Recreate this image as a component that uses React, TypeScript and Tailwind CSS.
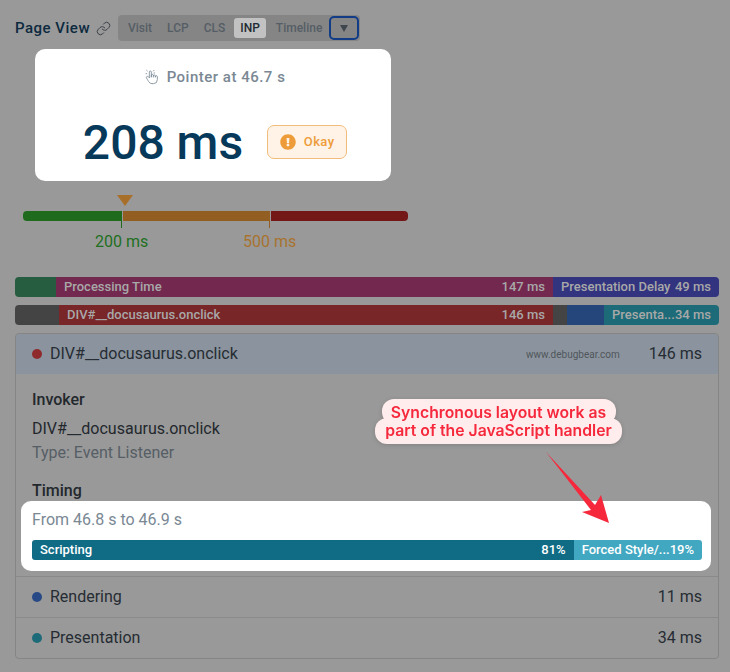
import { Link as LinkIcon } from 'lucide-react'
import { FaExclamationCircle } from 'react-icons/fa'
import { TbHandClick } from 'react-icons/tb'

function Tab({ label, active }: { label: string; active?: boolean }) {
  return (
    <div
      className={
        active
          ? 'flex h-5 items-center rounded-[3px] bg-[#c2c2c2] px-[6px] text-[#222b33]'
          : 'flex h-5 items-center px-[6px] text-[#555e66]'
      }
    >
      {label}
    </div>
  )
}

function Segment({ className, label, value }: { className: string; label?: string; value?: string }) {
  if (!label) return <div className={`h-5 shrink-0 ${className}`} />
  return (
    <div className={`flex h-5 shrink-0 items-center justify-between whitespace-nowrap px-2 text-[13px] font-medium text-[#a8a8a8] ${className}`}>
      <span>{label}</span>
      <span>{value}</span>
    </div>
  )
}

function TimingRow({ color, label, value }: { color: string; label: string; value: string }) {
  return (
    <div className="flex h-[41px] items-center justify-between border-t border-[#8a8a8a] px-4 text-base text-[#262c33]">
      <div className="flex items-center gap-2">
        <span className={`h-[10px] w-[10px] rounded-full ${color}`} />
        <span>{label}</span>
      </div>
      <span>{value}</span>
    </div>
  )
}

export default function App() {
  return (
    <div className="relative h-[672px] w-[730px] overflow-hidden bg-[#999999] pl-[15px] pr-[11px] pt-[15px] font-['Roboto',sans-serif]">
      <div className="flex h-[26px] items-center">
        <span className="text-[15px] font-medium tracking-[0.5px] text-[#0d2a3f]">Page View</span>
        <LinkIcon size={15} strokeWidth={1.5} className="ml-[6px] text-[#333a40]" />
        <div className="ml-[7px] flex h-[26px] w-[242px] items-center rounded-[4px] bg-[#858585] pl-[4px] text-xs font-medium">
          <Tab label="Visit" />
          <div className="w-[3px]" />
          <Tab label="LCP" />
          <div className="w-[3px]" />
          <Tab label="CLS" />
          <div className="w-[3px]" />
          <Tab label="INP" active />
          <div className="w-[4px]" />
          <Tab label="Timeline" />
          <div className="ml-[1px] flex h-6 w-[30px] items-center justify-center rounded-[5px] border-2 border-[#123c86]">
            <div className="h-0 w-0 border-x-[4px] border-t-[7px] border-x-transparent border-t-[#3f464d]" />
          </div>
        </div>
      </div>

      <div className="ml-5 mt-2 flex h-[132px] w-[356px] flex-col items-center rounded-[10px] bg-white pt-[17px]">
        <div className="flex items-center gap-[7px] pl-[3px] text-[15px] font-medium tracking-[0.5px] text-[#7a8894]">
          <TbHandClick size={16} strokeWidth={1.25} />
          <span>Pointer at 46.7 s</span>
        </div>
        <div className="mt-[24px] flex items-center pl-1">
          <span className="text-[48px] font-medium leading-[60px] text-[#07395a]">208 ms</span>
          <div className="mb-[2px] ml-[24px] flex h-[34px] w-[80px] items-center justify-center gap-2 rounded-[7px] border border-[#f2bd7c] bg-[#fef3e6] text-[13px] font-medium tracking-[0.4px] text-[#ee9c3a]">
            <FaExclamationCircle size={16} />
            <span>Okay</span>
          </div>
        </div>
      </div>

      <div className="ml-[102px] mt-[14px] h-0 w-0 border-x-[8px] border-t-[11px] border-x-transparent border-t-[#a86f2a]" />
      <div className="ml-2 mt-[5px] flex h-[10px] w-[385px] gap-px overflow-hidden rounded-[4px]">
        <div className="w-[99px] bg-[#1f6b1e]" />
        <div className="w-[147px] bg-[#935e22]" />
        <div className="flex-1 bg-[#741717]" />
      </div>
      <div className="relative ml-2 h-[46px] w-[385px] text-base">
        <div className="absolute left-[98px] top-0 h-[7px] w-px bg-[#1f6b1e]" />
        <div className="absolute left-[246px] top-0 h-[7px] w-px bg-[#935e22]" />
        <span className="absolute left-[72px] top-[9px] text-[#21701f]">200 ms</span>
        <span className="absolute left-[220px] top-[9px] text-[#a8732e]">500 ms</span>
      </div>

      <div className="mt-[10px] flex h-5 overflow-hidden rounded-[4px]">
        <Segment className="w-[41px] bg-[#265c3f]" />
        <Segment className="w-[497px] bg-[#72284f]" label="Processing Time" value="147 ms" />
        <Segment className="flex-1 bg-[#33347f]" label="Presentation Delay" value="49 ms" />
      </div>
      <div className="mt-2 flex h-5 overflow-hidden rounded-[4px]">
        <Segment className="w-[44px] bg-[#444444]" />
        <Segment className="w-[494px] bg-[#782628]" label="DIV#__docusaurus.onclick" value="146 ms" />
        <Segment className="w-[14px] bg-[#444444]" />
        <Segment className="w-[37px] bg-[#25467b]" />
        <Segment className="flex-1 bg-[#1d6b78]" label="Presenta..." value="34 ms" />
      </div>

      <div className="mt-2 h-[326px] rounded-[4px] border border-[#858585]">
        <div className="flex h-[40px] items-center rounded-t-[4px] bg-[#8b949e] px-4 text-base text-[#262c33]">
          <span className="h-[10px] w-[10px] rounded-full bg-[#8f2a2c]" />
          <span className="ml-2">DIV#__docusaurus.onclick</span>
          <span className="ml-auto text-[10px] text-[#50565c]">www.debugbear.com</span>
          <span className="ml-[29px]">146 ms</span>
        </div>
        <div className="px-4 pt-[17px] text-base text-[#23282d]">
          <div className="font-medium leading-[18px]">Invoker</div>
          <div className="mt-[11px] leading-[18px]">DIV#__docusaurus.onclick</div>
          <div className="mt-[6px] leading-[18px] text-[#565e66]">Type: Event Listener</div>
          <div className="mt-5 font-medium leading-[18px]">Timing</div>
        </div>
        <div className="ml-[5px] mr-[7px] mt-[1px] flex h-[70px] flex-col rounded-[10px] bg-white pl-[11px] pr-[9px] pt-[9px]">
          <div className="text-base leading-[20px] text-[#7a8894]">From 46.8 s to 46.9 s</div>
          <div className="mt-[10px] flex h-5 overflow-hidden rounded-[3px] text-[13px] font-medium text-white">
            <div className="flex w-[542px] items-center justify-between bg-[#106c85] px-2">
              <span>Scripting</span>
              <span>81%</span>
            </div>
            <div className="flex flex-1 items-center justify-between whitespace-nowrap bg-[#42a7c1] px-2">
              <span>Forced Style/...</span>
              <span>19%</span>
            </div>
          </div>
        </div>
        <div className="mt-[5px]">
          <TimingRow color="bg-[#274a86]" label="Rendering" value="11 ms" />
          <TimingRow color="bg-[#1d6b78]" label="Presentation" value="34 ms" />
        </div>
      </div>

      <div className="absolute left-[375px] top-[399px] flex w-[247px] flex-col items-center font-['Inter',sans-serif] text-[15.75px] font-semibold leading-[18px] text-[#f6283c] drop-shadow-sm">
        <div className="relative z-10 flex h-[25px] w-[234px] items-center justify-center rounded-[12px] bg-[#ffeced] pt-[3px]">Synchronous layout work as</div>
        <div className="-mt-[6px] flex h-[26px] w-[247px] items-center justify-center rounded-[12px] bg-[#ffeced]">part of the JavaScript handler</div>
      </div>
      <svg className="absolute left-0 top-0" width="730" height="672" viewBox="0 0 730 672">
        <polygon points="546,452 595,505 601,495 609,523 582,512 591,510" fill="#f6283c" />
      </svg>
    </div>
  )
}
